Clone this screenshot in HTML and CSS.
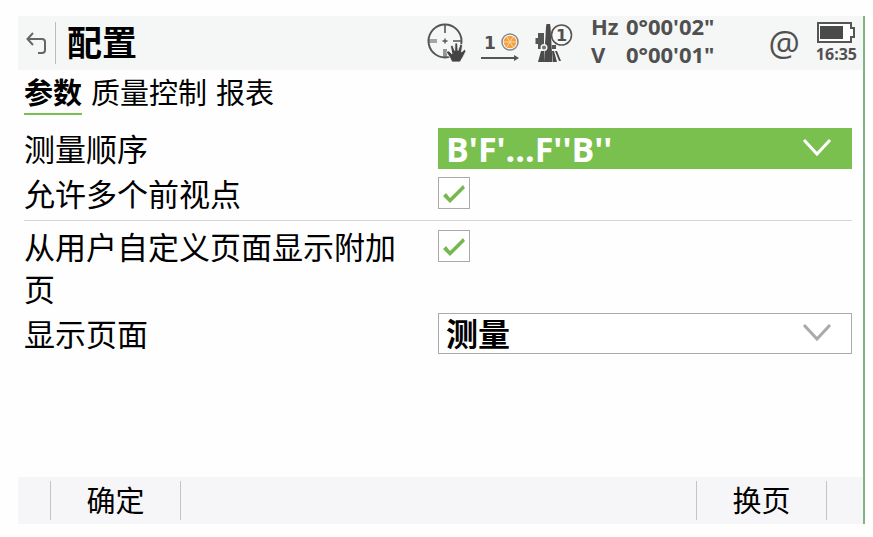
FILE: index.html
```html
<!DOCTYPE html>
<html lang="zh-CN">

<head>
    <meta charset="UTF-8">
    <meta name="viewport" content="width=device-width, initial-scale=1.0">
    <title>配置</title>
    <link rel="stylesheet" href="styles.css">
</head>

<body>
    <div class="screen">
        <header class="topbar">
            <button class="back" type="button" aria-label="返回">
                <svg width="22" height="24" viewBox="0 0 22 24" fill="none" stroke="#666" stroke-width="2">
                    <path d="M7 2 L1.500 8 L7 14 M2 8 H16 Q19 8 19 11 V19 Q19 22 16 22 H12" />
                </svg>
            </button>
            <h1 class="title">配置</h1>

            <div class="status">
                <!-- target aiming -->
                <svg width="39" height="40" viewBox="0 0 39 40" fill="none" stroke="#555">
                    <circle cx="18" cy="18" r="16.5" stroke-width="2" />
                    <path d="M18 2 V10 M26 18 H34" stroke-width="1.6" />
                    <path d="M2 17 H10 M2 19 H10 M17 26 V34 M19 26 V34" stroke-width="1.2" />
                    <path d="M18 15.500 V20.500 M15.500 18 H20.500" stroke-width="1.4" />
                    <path d="M25 39 L22.500 34 L19.500 29.500 L20.500 28 L22 28 L25 31 L23.500 23 L25.500 22 L27.700 27.500 L28 20 L30.500 20 L31 27.500 L33.300 21 L35.500 22 L34.500 29 L37.500 26.500 L39 28 L36 34 L33 39 Z"
                        fill="#444" stroke="#f5f6f6" stroke-width=".8" />
                </svg>
                <!-- single measurement with prism -->
                <svg width="41" height="36" viewBox="0 0 41 36">
                    <text class="icon-text" x="4" y="24" font-size="17">1</text>
                    <circle cx="30" cy="17" r="8" fill="#fff" stroke="#888" stroke-width="1.5" />
                    <circle cx="30" cy="17" r="6.300" fill="#f5a03c" />
                    <path d="M24 17 H36 M27 12 L33 22 M33 12 L27 22" stroke="#fbd5a2" stroke-width="1" />
                    <path d="M1 33 H36" stroke="#555" stroke-width="2" />
                    <path d="M34 30 L39 33 L34 36 Z" fill="#555" />
                </svg>
                <!-- total station, face 1 -->
                <svg width="38" height="40" viewBox="0 0 38 40">
                    <path d="M11 4 L11.500 1 H15 L15.500 4 L17.500 39 H9 Z" fill="#4a4a4a" />
                    <path d="M3 10 H9 V26 H3 Z M.5 15 H3 V21 H.5 Z M17 22 H21 V26 H17 Z" fill="#555" />
                    <path d="M6 28 H9 V39 H3 Z M17 28 H19 L22 39 H18 Z M20 28 H22 L26 38 H24 Z" fill="#4a4a4a" />
                    <circle cx="9" cy="24.500" r="2.800" fill="#777" stroke="#f5f6f6" stroke-width="1.4" />
                    <circle cx="26.500" cy="12" r="10" fill="#f8f8f8" stroke="#555" stroke-width="1.6" />
                    <text class="icon-text" x="21" y="18" font-size="16">1</text>
                </svg>
                <dl class="angles">
                    <dt>Hz</dt>
                    <dd>0°00'02"</dd>
                    <dt>V</dt>
                    <dd>0°00'01"</dd>
                </dl>
                <span class="at">@</span>
                <div class="power">
                    <svg width="38" height="21" viewBox="0 0 38 21">
                        <path d="M1 1 H34 V6 H37 V15 H34 V20 H1 Z" fill="#fff" stroke="#555" stroke-width="2" />
                        <rect x="3" y="4" width="23" height="13" fill="#4a4a4a" />
                    </svg>
                    <time>16:35</time>
                </div>
            </div>
        </header>

        <nav class="tabs">
            <a class="tab active" href="#params">参数</a>
            <a class="tab" href="#quality">质量控制</a>
            <a class="tab" href="#report">报表</a>
        </nav>

        <form class="settings" id="params">
            <div class="row">
                <label for="order">测量顺序</label>
                <div class="select selected">
                    <select id="order">
                        <option>B'F'...F''B''</option>
                    </select>
                    <svg class="chevron" width="30" height="18" viewBox="0 0 30 18">
                        <path d="M2 1 L15 15 L28 1" />
                    </svg>
                </div>
            </div>
            <div class="row">
                <label for="multi">允许多个前视点</label>
                <input class="check" type="checkbox" id="multi" checked>
            </div>
            <hr class="divider">
            <div class="row">
                <label for="extra">从用户自定义页面显示附加页</label>
                <input class="check" type="checkbox" id="extra" checked>
            </div>
            <div class="row">
                <label for="page">显示页面</label>
                <div class="select">
                    <select id="page">
                        <option>测量</option>
                    </select>
                    <svg class="chevron" width="30" height="18" viewBox="0 0 30 18">
                        <path d="M2 1 L15 15 L28 1" />
                    </svg>
                </div>
            </div>
        </form>

        <footer class="softkeys">
            <button class="softkey" type="button">确定</button>
            <button class="softkey" type="button">换页</button>
        </footer>
    </div>
</body>

</html>
```
FILE: styles.css
```css
* {
    box-sizing: border-box;
}

body {
    display: flex;
    min-height: 100vh;
    margin: 0;
    padding: 16px 8px 13px 18px;
    background: #fefefe;
    color: #000;
    font-family: "Open Sans", "Noto Sans CJK SC", sans-serif;
}

button,
select {
    font-family: inherit;
    color: inherit;
}

.screen {
    flex: 1;
    display: flex;
    flex-direction: column;
    border-right: 2px solid #7fb483;
}

/* Top bar */
.topbar {
    display: flex;
    align-items: center;
    height: 54px;
    padding-right: 6px;
    background: #f5f6f6;
}

.back {
    display: flex;
    align-items: center;
    justify-content: center;
    width: 38px;
    height: 42px;
    padding: 0;
    border: none;
    border-right: 1px solid #bbb;
    background: none;
    cursor: pointer;
}

.title {
    margin: 0 auto 0 11px;
    font-size: 35px;
    line-height: 42px;
    font-weight: 700;
}

.status {
    display: flex;
    align-items: center;
    gap: 14px;
    color: #505050;
}

.icon-text {
    font-family: "DejaVu Sans", sans-serif;
    font-weight: 700;
    fill: #505050;
}

.angles {
    display: grid;
    grid-template-columns: 35px auto;
    margin: 0 40px 6px 4px;
    font-size: 22px;
    line-height: 28px;
    font-weight: 700;
}

.angles dd {
    margin: 0;
}

.at {
    margin-right: 2px;
    font-size: 35px;
    line-height: 42px;
}

.power {
    display: flex;
    flex-direction: column;
    align-items: center;
    font-size: 16px;
    line-height: 22px;
    font-weight: 700;
}

/* Tabs */
.tabs {
    display: flex;
    gap: 9px;
    padding: 2px 6px 0;
}

.tab {
    height: 43px;
    font-size: 29px;
    line-height: 42px;
    color: inherit;
    text-decoration: none;
}

.tab.active {
    font-weight: 700;
    border-bottom: 2px solid #7ac04f;
}

/* Settings */
.settings {
    flex: 1;
    display: flex;
    flex-direction: column;
    gap: 3px;
    padding: 13px 11px 0 6px;
}

.row {
    display: grid;
    grid-template-columns: 1fr 1fr;
    align-items: start;
}

.row label {
    padding-right: 20px;
    font-size: 31px;
    line-height: 42px;
}

.divider {
    width: 100%;
    margin: 2px 0;
    border: none;
    border-top: 1px solid #d6d6d6;
}

.select {
    position: relative;
}

.select select {
    display: block;
    width: 100%;
    height: 41px;
    padding: 0 7px;
    border: 1px solid #aaa;
    border-radius: 0;
    background: #fff;
    font-size: 32px;
    line-height: 36px;
    font-weight: 700;
    appearance: none;
}

.select.selected select {
    border-color: #7ac04f;
    background: #7ac04f;
    color: #fff;
    font-size: 34px;
}

.chevron {
    position: absolute;
    top: 11px;
    right: 20px;
    fill: none;
    stroke: #aaa;
    stroke-width: 3;
    pointer-events: none;
}

.selected .chevron {
    stroke: #fff;
}

.check {
    width: 32px;
    height: 32px;
    margin: 4px 0 0;
    border: 1px solid #aaa;
    background: #fff;
    appearance: none;
}

.check:checked::before {
    content: "";
    display: block;
    width: 30px;
    height: 30px;
    background: #75b850;
    clip-path: polygon(4px 18px, 7px 15px, 11px 20px, 24px 7px, 26px 10px, 11px 25px);
}

/* Soft keys */
.softkeys {
    display: flex;
    justify-content: space-between;
    align-items: center;
    height: 47px;
    padding: 0 36px 0 32px;
    background: #f6f6f8;
}

.softkey {
    width: 131px;
    height: 39px;
    padding: 0;
    border: 1px solid #c4c4c4;
    border-width: 0 1px;
    background: none;
    font-size: 29px;
    line-height: 39px;
    cursor: pointer;
}
```
